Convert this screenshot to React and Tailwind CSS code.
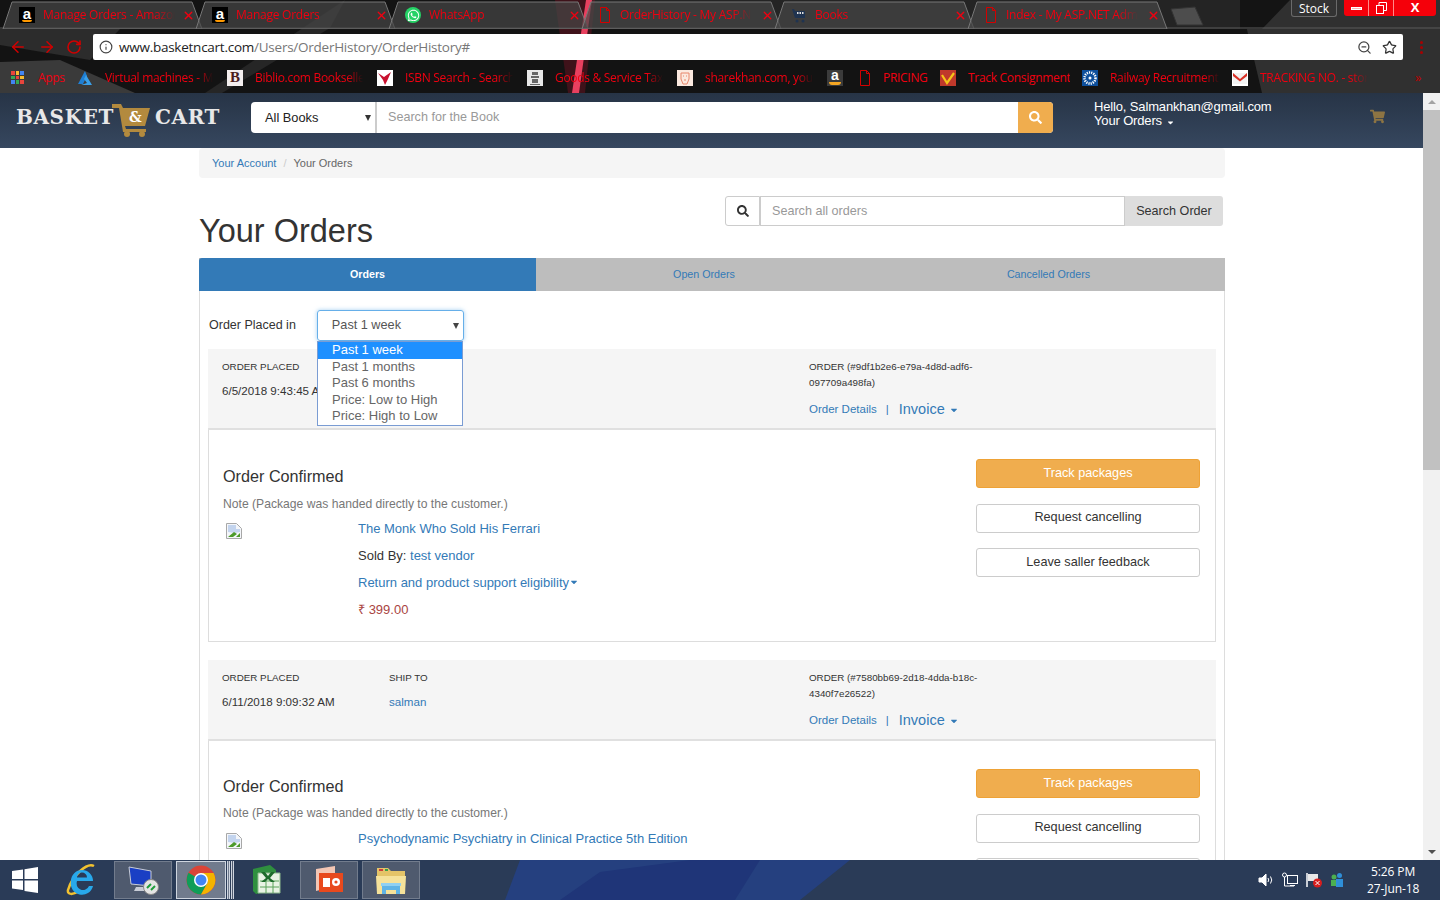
import React from "react";
import { ArrowLeft, ArrowRight, RotateCw, Info, ZoomOut, Star, X } from "lucide-react";
import { FaSearch, FaShoppingCart, FaWhatsapp, FaCaretDown } from "react-icons/fa";

function AmazonIcon() {
  return (
    <span className="relative flex h-4 w-4 shrink-0 items-start justify-center bg-black text-[15px] font-bold leading-[13px] text-white font-['Liberation_Sans',sans-serif]">
      a
      <span className="absolute bottom-[1px] left-[3px] h-[2px] w-[10px] rounded-b-full bg-[#f90]" />
    </span>
  );
}

function DocIcon() {
  return (
    <svg width="14" height="16" viewBox="0 0 14 16" fill="none" stroke="#d40000" strokeWidth="1" className="shrink-0">
      <path d="M2.5 .5h6l3 3v12h-9z M8.5 .5v3h3" />
    </svg>
  );
}

function WhatsAppIcon() {
  return (
    <span className="flex h-4 w-4 shrink-0 items-center justify-center rounded-full bg-[#25d366] text-white">
      <FaWhatsapp size={13} />
    </span>
  );
}

function BooksIcon() {
  return (
    <svg width="16" height="16" viewBox="0 0 16 16" className="shrink-0">
      <path d="M1 2h2l1 2h10v7H4z" fill="#1f3350" />
      <rect x="6" y="5" width="1.5" height="2" fill="#ddd" />
      <rect x="8.5" y="5" width="1.5" height="2" fill="#ddd" />
      <rect x="11" y="5" width="1.5" height="2" fill="#ddd" />
      <circle cx="6" cy="14" r="1.5" fill="#1f3350" />
      <circle cx="12" cy="14" r="1.5" fill="#1f3350" />
    </svg>
  );
}

const TABS = [
  { title: "Manage Orders - Amazon", icon: <AmazonIcon /> },
  { title: "Manage Orders", icon: <AmazonIcon /> },
  { title: "WhatsApp", icon: <WhatsAppIcon /> },
  { title: "OrderHistory - My ASP.NET", icon: <DocIcon /> },
  { title: "Books", icon: <BooksIcon /> },
  { title: "Index - My ASP.NET Admin", icon: <DocIcon /> },
];

function BrowserTab({ title, icon }) {
  return (
    <div className="relative flex h-[28px] w-[193px] shrink-0 items-center pl-[8px] pr-[6px]">
      <svg width="205" height="28" viewBox="0 0 205 28" className="absolute left-[-6px] top-0">
        <path d="M1 28 L10 1 H190 L200 28 Z" fill="#474747" fillOpacity="0.7" stroke="#777" strokeWidth="1" />
      </svg>
      <span className="relative flex min-w-0 flex-1 items-center gap-[8px] pl-[3px]">
        {icon}
        <span className="w-[132px] overflow-hidden whitespace-nowrap text-[12px] tracking-[-0.25px] text-[#f00010] [mask-image:linear-gradient(to_right,black_85%,transparent)]">
          {title}
        </span>
      </span>
      <X size={13} strokeWidth={2.5} className="relative text-[#f00010]" />
    </div>
  );
}

function Favicon({ children, className }) {
  return <span className={"flex h-4 w-4 shrink-0 items-center justify-center overflow-hidden leading-none " + className}>{children}</span>;
}

const BOOKMARKS = [
  {
    title: "Virtual machines - Microsoft Azure",
    icon: (
      <svg width="16" height="16" viewBox="0 0 16 16" className="shrink-0">
        <path d="M8 1 L1 14 H6 L10 6z" fill="#1f7fd4" />
        <path d="M9 5 L15 15 H4 L10 13 L7 9z" fill="#3aa0ea" />
      </svg>
    ),
  },
  { title: "Biblio.com Booksellers", icon: <Favicon className="bg-[#f3eeee] text-[15px] font-bold text-[#4a1c1c] font-['Liberation_Serif',serif]">B</Favicon> },
  {
    title: "ISBN Search - Search",
    icon: (
      <Favicon className="bg-white">
        <svg width="16" height="16" viewBox="0 0 16 16">
          <path d="M1 3 L7 7 L14 2 L11 9 L8 15 L6 10z" fill="#c8102e" />
        </svg>
      </Favicon>
    ),
  },
  {
    title: "Goods & Service Tax",
    icon: (
      <Favicon className="bg-[#e8e8e8]">
        <svg width="16" height="16" viewBox="0 0 16 16">
          <path d="M5 2h6v3H5z M4 6h8v2H4z M5 9h6v4H5z M3 14h10v1H3z" fill="#666" />
        </svg>
      </Favicon>
    ),
  },
  {
    title: "sharekhan.com, your guide",
    icon: (
      <Favicon className="bg-[#fbe9df]">
        <svg width="16" height="16" viewBox="0 0 16 16" fill="none" stroke="#e8866a">
          <path d="M4 3h8v6l-2 5H6L4 9z M6 6h1 M9 6h1 M7 10h2" />
        </svg>
      </Favicon>
    ),
  },
];

const BOOKMARKS_RIGHT = [
  {
    title: "Track Consignment",
    w: "w-[102px]",
    plain: true,
    icon: (
      <Favicon className="bg-[#c0392b]">
        <svg width="16" height="16" viewBox="0 0 16 16" fill="none" stroke="#f5c518" strokeWidth="2.2">
          <path d="M2 5 L7 13 L14 3" />
        </svg>
      </Favicon>
    ),
  },
  {
    title: "Railway Recruitment Board",
    w: "w-[110px]",
    icon: (
      <Favicon className="bg-[#0d4f9c]">
        <svg width="14" height="14" viewBox="0 0 14 14">
          <circle cx="7" cy="7" r="5.5" fill="none" stroke="#fff" strokeWidth="2.5" strokeDasharray="1.2 1" />
          <circle cx="7" cy="7" r="1.5" fill="#fff" />
        </svg>
      </Favicon>
    ),
  },
  {
    title: "TRACKING NO. - store",
    w: "w-[108px]",
    icon: (
      <Favicon className="bg-white">
        <svg width="16" height="16" viewBox="0 0 16 16">
          <rect x="1" y="3" width="14" height="11" fill="#f2f2f2" />
          <path d="M1 3 L8 9 L15 3 V6 L8 11.5 L1 6z" fill="#d93025" />
        </svg>
      </Favicon>
    ),
  },
];

function BookmarkText({ children, className, plain }) {
  return (
    <span className={"overflow-hidden whitespace-nowrap text-[12px] tracking-[-0.3px] text-[#f00010] " + (plain ? "" : "[mask-image:linear-gradient(to_right,black_85%,transparent)] ") + className}>
      {children}
    </span>
  );
}

function ChromeBar() {
  return (
    <div className="relative h-[93px] shrink-0 overflow-hidden bg-[#131313] font-['Open_Sans',sans-serif]">
      {/* theme artwork behind the tabs */}
      <svg width="1440" height="93" viewBox="0 0 1440 93" className="absolute left-0 top-0">
        <path d="M0 29 H120 L90 60 L0 45 Z" fill="#2c2c2c" />
        <path d="M0 62 L60 60 L135 93 H0 Z" fill="#3a3a3a" />
        <path d="M345 0 L205 93 H222 L330 28 Z" fill="#262626" />
        <path d="M590 0 H1240 V29 H590 Z" fill="#242424" />
        <path d="M1240 0 H1440 V93 H1262 Z" fill="#303030" />
        <path d="M1240 0 L1290 0 L1262 29 H1240 Z" fill="#141414" />
        <path d="M555 0 H595 L585 93 H568 Z" fill="#a5122b" fillOpacity="0.3" />
        <path d="M586 0 L592 0 L579 93 L572 93 Z" fill="#e8405f" />
        <path d="M0 28 H1440" stroke="#5a5a5a" />
      </svg>

      <div className="relative flex h-[29px] pl-[8px] pt-[1px]">
        {TABS.map((t, i) => (
          <BrowserTab key={i} title={t.title} icon={t.icon} />
        ))}
        <svg width="36" height="24" viewBox="0 0 36 24" className="ml-[4px] mt-[5px] shrink-0">
          <path d="M1 3 L25 1 L33 19 H7 Z" fill="#4d4d4d" stroke="#333" />
        </svg>
        {/* window controls */}
        <div className="absolute right-[103px] top-0 flex h-[17px] w-[46px] items-center justify-center rounded-b-[3px] border border-t-0 border-[#6a6a6a] bg-[#333] pt-[2px] text-[12px] leading-none text-white">
          Stock
        </div>
        <div className="absolute right-[4px] top-0 flex h-[16px] w-[92px] overflow-hidden rounded-b-[3px] bg-[#f5000a]">
          <div className="flex w-[25px] items-center justify-center border-r border-[#ff8a8a]">
            <span className="h-[3px] w-[11px] border border-white bg-[#ffb0b0]" />
          </div>
          <div className="flex w-[25px] items-center justify-center border-r border-[#ff8a8a]">
            <svg width="12" height="12" viewBox="0 0 12 12" fill="none" stroke="#fff">
              <rect x="1.5" y="3.5" width="7" height="8" />
              <path d="M4 3V.5h7.5v8H9" />
            </svg>
          </div>
          <div className="flex flex-1 items-center justify-center text-[13px] font-bold text-white">X</div>
        </div>
      </div>

      <div className="relative flex h-[35px] items-center pt-[1px]">
        <ArrowLeft size={18} className="ml-[9px] text-[#d00000]" />
        <ArrowRight size={18} className="ml-[11px] text-[#d00000]" />
        <RotateCw size={16} strokeWidth={2.4} className="ml-[10px] text-[#d00000]" />
        <div className="ml-[11px] flex h-[26px] w-[1310px] items-center rounded-[2px] bg-white pl-[6px] pr-[6px]">
          <Info size={14} className="text-[#444]" />
          <span className="ml-[6px] text-[13.5px] tracking-[-0.25px] text-[#222]">
            www.basketncart.com<span className="text-[#777]">/Users/OrderHistory/OrderHistory#</span>
          </span>
          <ZoomOut size={15} className="ml-auto text-[#444]" />
          <Star size={15} className="ml-[10px] text-[#333]" />
        </div>
        <span className="ml-[17px] flex flex-col gap-[2px]">
          <span className="h-[3px] w-[3px] rounded-full bg-[#a80000]" />
          <span className="h-[3px] w-[3px] rounded-full bg-[#a80000]" />
          <span className="h-[3px] w-[3px] rounded-full bg-[#a80000]" />
        </span>
      </div>

      <div className="relative flex h-[27px] items-center">
        <span className="ml-[11px] grid h-[13px] w-[13px] shrink-0 grid-cols-3 gap-[1px]">
          {["#e8453c", "#f9bb2d", "#4285f4", "#34a853", "#e8453c", "#f9bb2d", "#4285f4", "#34a853", "#e8453c"].map((c, i) => (
            <span key={i} style={{ backgroundColor: c }} />
          ))}
        </span>
        <BookmarkText plain className="ml-[14px] mr-[11px] w-[28px]">Apps</BookmarkText>
        <div className="flex">
          {BOOKMARKS.map((b, i) => (
            <div key={i} className="flex w-[150px] items-center gap-[12px]">
              {b.icon}
              <BookmarkText className="w-[108px]">{b.title}</BookmarkText>
            </div>
          ))}
        </div>
        <AmazonMark />
        <span className="ml-[15px]"><DocIcon /></span>
        <BookmarkText plain className="ml-[11px] w-[46px]">PRICING</BookmarkText>
        <div className="ml-[11px] flex gap-[12px]">
          {BOOKMARKS_RIGHT.map((b, i) => (
            <div key={i} className="flex items-center gap-[12px]">
              {b.icon}
              <BookmarkText plain={b.plain} className={b.w}>{b.title}</BookmarkText>
            </div>
          ))}
        </div>
        <span className="ml-[47px] text-[13px] leading-none text-[#c00000]">»</span>
      </div>
    </div>
  );
}

function AmazonMark() {
  return (
    <span className="relative flex h-4 w-4 shrink-0 justify-center bg-[#3b3b3b] text-[14px] font-bold leading-[11px] text-white font-['Liberation_Sans',sans-serif]">
      a
      <span className="absolute bottom-[1px] left-[2px] h-[3px] w-[12px] rounded-b-full bg-[#f5a623]" />
    </span>
  );
}

function Caret({ className }) {
  return <span className={"h-0 w-0 border-x-[3.5px] border-t-[6px] border-x-transparent " + className} />;
}

function SiteHeader() {
  return (
    <div className="flex h-[55px] shrink-0 items-start bg-gradient-to-b from-[#273446] to-[#36475f] font-['Liberation_Sans',sans-serif]">
      <div className="ml-[16px] mt-[11px] flex w-[206px] font-['DejaVu_Serif',serif] text-[20px] font-bold leading-[27px] tracking-[0.6px] text-[#e8e8e8]">
        <span className="w-[96px]">BASKET</span>
        <span className="relative h-[33px] w-[38px] shrink-0">
          <svg width="38" height="33" viewBox="0 0 38 33">
            <path d="M0 0 H9 L11 4 H38 L33 22 H13 L14 25 H34 V28 H11 L7 4 H0 Z" fill="#b38a3e" />
            <circle cx="15" cy="30" r="3" fill="#b38a3e" />
            <circle cx="30" cy="30" r="3" fill="#b38a3e" />
          </svg>
          <span className="absolute left-[17px] top-[5px] text-[14px] leading-[16px] text-white">&amp;</span>
        </span>
        <span className="ml-[5px]">CART</span>
      </div>
      <div className="ml-[29px] mt-[9px] flex h-[31px] w-[802px] overflow-hidden rounded-[4px] bg-white">
        <div className="flex w-[126px] items-center border-r-2 border-[#ccc] pl-[14px] text-[12.8px] text-[#222]">
          All Books
          <Caret className="ml-auto mr-[4px] border-t-[#333]" />
        </div>
        <div className="flex flex-1 items-center pl-[11px] text-[12.6px] text-[#999]">Search for the Book</div>
        <div className="flex w-[35px] items-center justify-center bg-[#f0ad4e] text-white">
          <FaSearch size={13} />
        </div>
      </div>
      <div className="ml-[41px] mt-[7px] w-[260px] text-[13px] leading-[14px] tracking-[-0.15px] text-white">
        <div>Hello, Salmankhan@gmail.com</div>
        <div className="flex items-center">
          Your Orders
          <FaCaretDown size={9} className="ml-[4px] mt-[2px]" />
        </div>
      </div>
      <FaShoppingCart size={15} className="ml-[16px] mt-[16px] text-[#8d7443]" />
    </div>
  );
}

function BrokenImage() {
  return (
    <svg width="16" height="16" viewBox="0 0 16 16" className="shrink-0">
      <path d="M.5 .5h10l5 5v10H.5z" fill="#f4f6fa" stroke="#a8a8a8" />
      <path d="M2 2h8v4h4v3l-5 1-7-1z" fill="#c3d4ee" />
      <path d="M2 14 L8 9 L11 11 L7 14 Z" fill="#4c9a2a" />
      <path d="M12 12 L14 10 V14 H10 Z" fill="#4c9a2a" />
    </svg>
  );
}

function OrderHeader({ placed, shipTo, id1, id2 }) {
  return (
    <div className="flex h-[80.5px] border-b-2 border-[#e0e0e0] bg-[#f5f5f5] pl-[14px] text-[#333]">
      <div className="w-[167px] pt-[10px]">
        <div className="text-[9.8px] leading-[16px]">ORDER PLACED</div>
        <div className="mt-[8px] whitespace-nowrap text-[11.6px] leading-[16px]">{placed}</div>
      </div>
      <div className="w-[420px] pt-[10px]">
        <div className="text-[9.8px] leading-[16px]">SHIP TO</div>
        <div className="mt-[8px] text-[11.6px] leading-[16px] text-[#337ab7]">{shipTo}</div>
      </div>
      <div className="pt-[10px]">
        <div className="text-[9.8px] leading-[16px]">ORDER (#{id1}</div>
        <div className="text-[9.8px] leading-[16px]">{id2})</div>
        <div className="mt-[10px] flex items-center text-[11.5px] leading-[16px] text-[#337ab7]">
          Order Details
          <span className="ml-[9px]">|</span>
          <span className="ml-[10px] text-[14.5px]">Invoice</span>
          <FaCaretDown size={10} className="ml-[4px] mt-[2px]" />
        </div>
      </div>
    </div>
  );
}

function OrderButton({ children, primary }) {
  const cls = primary
    ? "border-[#eea236] bg-[#f0ad4e] text-white"
    : "border-[#ccc] bg-white text-[#333]";
  return (
    <div className={"flex h-[29px] w-[224px] items-center justify-center rounded-[3px] border text-[12.7px] " + cls}>
      {children}
    </div>
  );
}

function OrderCard({ title, price, second }) {
  return (
    <div className="flex border border-t-0 border-[#ddd] pl-[14px] pr-[15px]">
      <div className="flex-1">
        <div className={(second ? "mt-[35px]" : "mt-[36px]") + " text-[16.2px] leading-[20px] text-[#333]"}>Order Confirmed</div>
        <div className={(second ? "mt-[9px]" : "mt-[10px]") + " text-[12.15px] leading-[16px] text-[#777]"}>Note (Package was handed directly to the customer.)</div>
        <div className={(second ? "mt-[9px]" : "mt-[8px]") + " flex"}>
          <div className="w-[135px] pl-[3px] pt-[3px]">
            <BrokenImage />
          </div>
          <div className="pb-[23.5px] text-[13px] leading-[17px]">
            <div className="text-[#337ab7]">{title}</div>
            <div className="mt-[10px] text-[#333]">
              Sold By: <span className="text-[#337ab7]">test vendor</span>
            </div>
            <div className="mt-[10px] flex items-center text-[#337ab7]">
              Return and product support eligibility
              <FaCaretDown size={10} />
            </div>
            <div className="mt-[10px] text-[#a94442]">₹ {price}</div>
          </div>
        </div>
      </div>
      <div className={(second ? "pt-[28.5px]" : "pt-[29.5px]") + " flex flex-col gap-[15.5px]"}>
        <OrderButton primary>Track packages</OrderButton>
        <OrderButton>Request cancelling</OrderButton>
        <OrderButton>Leave saller feedback</OrderButton>
      </div>
    </div>
  );
}

function PageBody() {
  const options = ["Past 1 months", "Past 6 months", "Price: Low to High", "Price: High to Low"];
  return (
    <div className="ml-[199px] w-[1026px] text-[#333]">
      <div className="flex h-[30px] items-center rounded-[4px] bg-[#f5f5f5] pl-[13px] pt-[1px] text-[11px]">
        <span className="text-[#337ab7]">Your Account</span>
        <span className="mx-[7px] text-[#ccc]">/</span>
        <span className="text-[#666]">Your Orders</span>
      </div>

      <div className="flex h-[80px] items-start justify-between">
        <h1 className="mt-[35px] text-[32.5px] leading-[36px] text-[#333]">Your Orders</h1>
        <div className="mr-[2px] mt-[18px] flex h-[30px] w-[498px] text-[12.6px]">
          <div className="flex w-[35px] items-center justify-center rounded-l-[3px] border border-[#ccc] bg-white text-[#333]">
            <FaSearch size={12} />
          </div>
          <div className="flex flex-1 items-center border border-[#ccc] pl-[11px] text-[#999]">Search all orders</div>
          <div className="flex w-[98px] items-center justify-center rounded-r-[3px] bg-[#ddd] text-[#333]">Search Order</div>
        </div>
      </div>

      <div className="flex h-[33px] bg-[#bdbdbd] text-[10.7px] text-[#337ab7]">
        <div className="flex w-[337px] items-center justify-center rounded-tl-[3px] bg-[#337ab7] font-bold text-white">Orders</div>
        <div className="flex w-[336px] items-center justify-center">Open Orders</div>
        <div className="flex flex-1 items-center justify-center">Cancelled Orders</div>
      </div>

      <div className="border-x border-[#ddd] px-[8px]">
        <div className="relative flex h-[58px] items-start">
          <span className="ml-[1px] mt-[26px] text-[12.5px] leading-[16px]">Order Placed in</span>
          <div className="ml-[21px] mt-[19px] flex h-[31px] w-[147px] items-center rounded-[3px] border border-[#66afe9] pl-[14px] text-[12.7px] text-[#555] shadow-[0_0_4px_rgba(102,175,233,0.6)]">
            Past 1 week
            <Caret className="ml-auto mr-[4px] border-t-[#444]" />
          </div>
          {/* open select list */}
          <div className="absolute left-[109px] top-[50px] z-10 w-[146px] border border-[#7a9cd3] bg-white text-[13px] leading-[16.5px] text-[#666]">
            <div className="bg-[#1e90ff] pl-[14px] text-white">Past 1 week</div>
            {options.map((o) => (
              <div key={o} className="pl-[14px]">{o}</div>
            ))}
          </div>
        </div>

        <OrderHeader placed="6/5/2018 9:43:45 AM" id1="9df1b2e6-e79a-4d8d-adf6-" id2="097709a498fa" />
        <OrderCard title="The Monk Who Sold His Ferrari" price="399.00" />

        <div className="mt-[18px]">
          <OrderHeader placed="6/11/2018 9:09:32 AM" shipTo="salman" id1="7580bb69-2d18-4dda-b18c-" id2="4340f7e26522" />
          <OrderCard second title="Psychodynamic Psychiatry in Clinical Practice 5th Edition" price="399.00" />
        </div>
      </div>
    </div>
  );
}

function Scrollbar() {
  return (
    <div className="flex w-[17px] shrink-0 flex-col bg-[#f1f1f1] text-[#555]">
      <div className="flex h-[17px] items-center justify-center">
        <span className="border-x-[4px] border-b-[4px] border-x-transparent border-b-[#a3a3a3]" />
      </div>
      <div className="h-[360px] bg-[#c1c1c1]" />
      <div className="flex-1" />
      <div className="flex h-[17px] items-center justify-center">
        <span className="border-x-[4px] border-t-[4px] border-x-transparent border-t-[#505050]" />
      </div>
    </div>
  );
}

function TaskBox({ w, active, children, className }) {
  return (
    <div
      className={
        "flex h-[38px] shrink-0 items-center justify-center border " +
        (active ? "border-[#cfd5df] bg-[#717b8d] " : "border-[#727c8d] bg-[#4f5a6e] ") +
        w + " " + (className || "")
      }
    >
      {children}
    </div>
  );
}

function Taskbar() {
  return (
    <div className="relative flex h-[40px] shrink-0 items-center overflow-hidden bg-[#2a3b57] font-['Open_Sans',sans-serif]">
      <svg width="1440" height="40" viewBox="0 0 1440 40" className="absolute left-0 top-0">
        <path d="M505 40 L520 0 H850 L800 40 Z" fill="#25407f" />
        <path d="M560 40 L600 12 L690 0 L760 0 L735 40 Z" fill="#1f3578" />
      </svg>
      <svg width="26" height="26" viewBox="0 0 26 26" className="relative ml-[12px]">
        <path d="M0 4 L11 2.5 V12 H0 Z M12.5 2.3 L26 0 V12 H12.5 Z M0 13.5 H11 V23 L0 21.5 Z M12.5 13.5 H26 V26 L12.5 24 Z" fill="#fff" />
      </svg>
      <svg width="34" height="34" viewBox="0 0 34 34" className="relative ml-[27px]" fill="none">
        <path d="M29 3 C22 -1 7 13 3 27 C2 32 8 32 14 28" stroke="#f2c230" strokeWidth="2.5" />
        <path d="M6 18 A11 11 0 0 1 28 18 H12 A6 6 0 0 0 24 23 H28 A11 11 0 0 1 6 18 Z M12 14.5 H22 A5 5 0 0 0 12 14.5 Z" fill="#28a8ea" fillRule="evenodd" />
      </svg>
      <TaskBox w="w-[58px]" className="relative ml-[15px]">
        <svg width="34" height="32" viewBox="0 0 34 32">
          <path d="M3 3 L25 7 V22 L5 20 Z" fill="#1a3fc4" stroke="#c8ccd6" />
          <path d="M10 23 H20 L22 27 H8 Z" fill="#c8ccd6" />
          <circle cx="25" cy="23" r="7.5" fill="#e4e4e4" stroke="#888" />
          <path d="M21 24 L25 20 M25 26 L29 22" stroke="#1e9c3a" strokeWidth="2" />
        </svg>
      </TaskBox>
      <TaskBox w="w-[50px]" active className="relative ml-[4px]">
        <svg width="30" height="30" viewBox="0 0 30 30">
          <circle cx="15" cy="15" r="14.5" fill="#db4437" />
          <path d="M15 15 L2.5 7.8 A14.5 14.5 0 0 0 15 29.5 L22 17 Z" fill="#0f9d58" />
          <path d="M15 8 H27.6 A14.5 14.5 0 0 1 15 29.5 L22 17 Z" fill="#f4b400" />
          <circle cx="15" cy="15" r="7" fill="#fff" />
          <circle cx="15" cy="15" r="5.5" fill="#4285f4" />
        </svg>
      </TaskBox>
      <span className="relative ml-[1px] h-[38px] w-[3px] border-x border-[#cfd5df] bg-[#717b8d]" />
      <span className="relative ml-[1px] h-[38px] w-[3px] border-x border-[#cfd5df] bg-[#4f5a6e]" />
      <svg width="32" height="32" viewBox="0 0 32 32" className="relative ml-[16px]">
        <path d="M3 5 L20 1 L26 6 V26 L6 30 L3 27 Z" fill="#2f8f3f" />
        <path d="M8 9 L30 9 V29 L8 29 Z" fill="#e8f3e4" stroke="#8cb98c" />
        <path d="M10 17 H29 M10 23 H29 M16 17 V29 M23 17 V29" stroke="#5aa25a" />
        <path d="M11 8 H15 L18 12 L21 8 H25 L20 14 L25 18 H21 L18 15 L15 18 H11 L16 14 Z" fill="#1e6b2c" />
      </svg>
      <TaskBox w="w-[58px]" className="relative ml-[18px]">
        <svg width="32" height="32" viewBox="0 0 32 32">
          <path d="M3 5 L22 2 V10 H7 V26 L3 27 Z" fill="#f3c6b4" />
          <rect x="6" y="9" width="24" height="19" fill="#e8491d" />
          <rect x="10" y="14" width="7" height="9" fill="#fff" />
          <circle cx="23" cy="18" r="4" fill="#fff" />
          <circle cx="23" cy="18" r="1.6" fill="#e8491d" />
        </svg>
      </TaskBox>
      <TaskBox w="w-[58px]" className="relative ml-[4px]">
        <svg width="34" height="32" viewBox="0 0 34 32">
          <path d="M3 4 H14 L17 7 H31 V28 H3 Z" fill="#e4c468" />
          <rect x="5" y="5" width="4" height="2" fill="#d13c3c" />
          <rect x="11" y="5" width="3" height="2" fill="#3aa04a" />
          <path d="M2 12 H32 L31 30 H3 Z" fill="#f5e29a" />
          <path d="M8 30 V22 H26 V30 H22 V26 H12 V30 Z" fill="#5fb4e6" />
          <rect x="7" y="19" width="20" height="3" fill="#8fd0f2" />
        </svg>
      </TaskBox>

      <div className="relative ml-auto flex items-center">
        <svg width="16" height="14" viewBox="0 0 16 14" fill="none" stroke="#fff">
          <path d="M1 5 H4 L8 1 V13 L4 9 H1 Z" fill="#fff" />
          <path d="M10 5 Q11.5 7 10 9 M12.5 3.5 Q15 7 12.5 10.5" />
        </svg>
        <svg width="16" height="16" viewBox="0 0 16 16" fill="none" stroke="#fff" className="ml-[8px]">
          <rect x="5.5" y="3.5" width="10" height="8" />
          <circle cx="2.5" cy="3" r="2" />
          <path d="M2.5 5 V14 H12 M8 13.5 H13" />
        </svg>
        <svg width="16" height="16" viewBox="0 0 16 16" className="ml-[8px]">
          <path d="M1 1 V15" stroke="#fff" strokeWidth="1.5" />
          <path d="M2 2 H12 V9 H2 Z" fill="#e8e8e8" />
          <circle cx="11.5" cy="11" r="4.5" fill="#d81e1e" />
          <path d="M9.5 9 L13.5 13 M13.5 9 L9.5 13" stroke="#fff" />
        </svg>
        <svg width="14" height="16" viewBox="0 0 14 16" className="ml-[8px]">
          <circle cx="4" cy="5" r="2.5" fill="#4caf50" />
          <path d="M1 8 H7 V14 H1 Z" fill="#4caf50" />
          <circle cx="9.5" cy="3.5" r="2.5" fill="#2f8fd8" />
          <path d="M6 7 H13 V15 H6 Z" fill="#2f8fd8" />
        </svg>
        <div className="ml-[23px] mr-[21px] w-[52px] text-center text-[12px] leading-[17px] tracking-[-0.1px] text-white">
          <div>5:26 PM</div>
          <div className="whitespace-nowrap">27-Jun-18</div>
        </div>
      </div>
    </div>
  );
}

export default function App() {
  return (
    <div className="flex h-screen flex-col overflow-hidden bg-white font-['Liberation_Sans',sans-serif]">
      <ChromeBar />
      <div className="flex min-h-0 flex-1">
        <div className="flex min-w-0 flex-1 flex-col overflow-hidden">
          <SiteHeader />
          <PageBody />
        </div>
        <Scrollbar />
      </div>
      <Taskbar />
    </div>
  );
}
